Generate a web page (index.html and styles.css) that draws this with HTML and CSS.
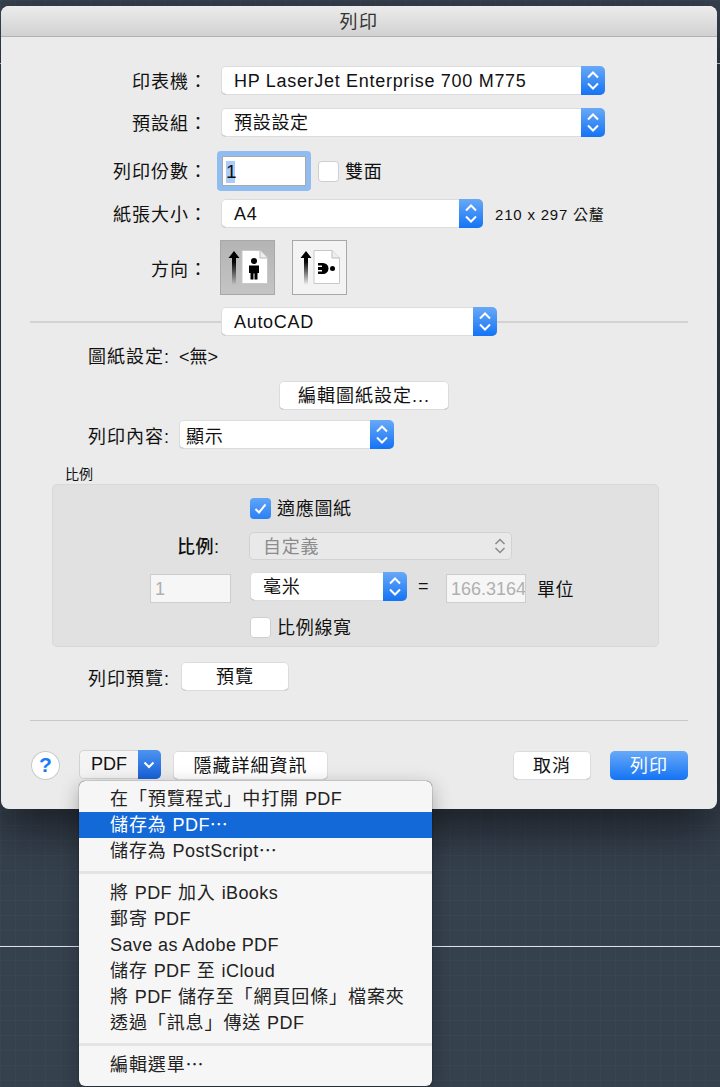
FILE: index.html
```html
<!DOCTYPE html>
<html lang="zh-Hant">
<head>
    <meta charset="UTF-8">
    <title>列印</title>
    <link rel="stylesheet" href="styles.css">
</head>
<body>
    <svg width="0" height="0" class="defs">
        <symbol id="updown" viewBox="0 0 24 29">
            <path d="M7 11.5 L12 6.5 L17 11.5 M7 17.5 L12 22.5 L17 17.5" fill="none" stroke="#fff" stroke-width="2"/>
        </symbol>
    </svg>

    <div class="line line-top"></div>
    <div class="line line-bottom"></div>

    <div class="dialog">
        <div class="titlebar">列印</div>

        <div class="row row-printer">
            <div class="label">印表機：</div>
            <div class="select select-wide"><span class="lat">HP LaserJet Enterprise 700 M775</span><i class="step"><svg><use href="#updown"/></svg></i></div>
        </div>
        <div class="row row-preset">
            <div class="label">預設組：</div>
            <div class="select select-wide"><span>預設設定</span><i class="step"><svg><use href="#updown"/></svg></i></div>
        </div>
        <div class="row row-copies">
            <div class="label">列印份數：</div>
            <div class="focus"><div class="field"><span class="sel">1</span></div></div>
            <div class="check check-copies"></div>
            <div class="check-text">雙面</div>
        </div>
        <div class="row row-paper">
            <div class="label">紙張大小：</div>
            <div class="select select-paper"><span class="lat">A4</span><i class="step"><svg><use href="#updown"/></svg></i></div>
            <div class="paper-size">210 x 297 公釐</div>
        </div>
        <div class="row row-orient">
            <div class="label label-orient">方向：</div>
            <div class="orient orient-on">
                <svg width="53" height="53" viewBox="0 0 53 53">
                    <defs>
                        <linearGradient id="fade" x1="0" y1="0" x2="0" y2="1">
                            <stop offset="0.3" stop-color="#000"/>
                            <stop offset="1" stop-color="#000" stop-opacity="0"/>
                        </linearGradient>
                    </defs>
                    <path d="M13 10 L7.5 17 H11 V44 H15 V17 H18.5 Z" fill="url(#fade)"/>
                    <path d="M21 9.5 H39 L46.5 17 V42.5 H21 Z" fill="#fff" stroke="#c8c8c8"/>
                    <path d="M39 9.5 V17 H46.5" fill="#eee" stroke="#bbb"/>
                    <circle cx="33" cy="20" r="3" fill="#000"/>
                    <path d="M28 24.500 H38 V32 H36.500 V38.500 H33.500 V32.500 H32.500 V38.500 H29.500 V32 H28 Z" fill="#000"/>
                </svg>
            </div>
            <div class="orient">
                <svg width="53" height="53" viewBox="0 0 53 53">
                    <path d="M13 10 L7.5 17 H11 V44 H15 V17 H18.5 Z" fill="url(#fade)"/>
                    <path d="M21 9.5 H39 L46.5 17 V42.5 H21 Z" fill="#fff" stroke="#c8c8c8"/>
                    <path d="M39 9.5 V17 H46.5" fill="#eee" stroke="#bbb"/>
                    <path d="M25 22 H30 A5.5 5.5 0 0 1 30 33 H25 V30.500 H29 V29 H25 V26 H29 V24.500 H25 Z" fill="#000"/>
                    <circle cx="39.500" cy="27.500" r="2.500" fill="#000"/>
                </svg>
            </div>
        </div>
        <div class="row row-app">
            <div class="rule"></div>
            <div class="select select-app"><span class="lat">AutoCAD</span><i class="step"><svg><use href="#updown"/></svg></i></div>
            <div class="rule"></div>
        </div>
        <div class="row row-setup"><span class="text-label">圖紙設定:</span><span>&lt;無&gt;</span></div>
        <div class="row row-edit">
            <div class="btn btn-edit">編輯圖紙設定...</div>
        </div>
        <div class="row row-content">
            <div class="text-label">列印內容:</div>
            <div class="select select-content"><span>顯示</span><i class="step"><svg><use href="#updown"/></svg></i></div>
        </div>

        <div class="caption">比例</div>
        <div class="group">
            <div class="group-row group-fit">
                <div class="check check-on">
                    <svg width="21" height="21" viewBox="0 0 21 21"><path d="M5.500 11 L9 14.500 L15.500 6.500" fill="none" stroke="#fff" stroke-width="2"/></svg>
                </div>
                <div class="check-text">適應圖紙</div>
            </div>
            <div class="group-row group-scale">
                <div class="scale-label">比例:</div>
                <div class="select select-off"><span>自定義</span>
                    <svg class="off-arrows" width="14" height="20" viewBox="0 0 14 20"><path d="M2.500 8 L7 3.500 L11.500 8 M2.500 12 L7 16.500 L11.500 12" fill="none" stroke="#8a8a8a" stroke-width="1.500"/></svg>
                </div>
            </div>
            <div class="group-row group-units">
                <div class="field-off field-one">1</div>
                <div class="select select-unit"><span>毫米</span><i class="step"><svg><use href="#updown"/></svg></i></div>
                <div class="equals">=</div>
                <div class="field-off field-value">166.3164</div>
                <div class="unit-text">單位</div>
            </div>
            <div class="group-row group-lineweight">
                <div class="check"></div>
                <div class="check-text">比例線寬</div>
            </div>
        </div>

        <div class="row row-preview">
            <div class="text-label">列印預覽:</div>
            <div class="btn btn-preview">預覽</div>
        </div>

        <div class="rule-full"></div>

        <div class="footer">
            <div class="help">?</div>
            <div class="pdf">
                <span>PDF</span>
                <i class="pdf-arrow"><svg width="22" height="29" viewBox="0 0 22 29"><path d="M6.500 12.500 L11 17 L15.500 12.500" fill="none" stroke="#fff" stroke-width="2"/></svg></i>
            </div>
            <div class="btn btn-hide">隱藏詳細資訊</div>
            <div class="spacer"></div>
            <div class="btn btn-cancel">取消</div>
            <div class="btn btn-print">列印</div>
        </div>
    </div>

    <div class="menu">
        <div class="item">在「預覽程式」中打開 <span class="lat">PDF</span></div>
        <div class="item item-on">儲存為 <span class="lat">PDF</span>⋯</div>
        <div class="item">儲存為 <span class="lat">PostScript</span>⋯</div>
        <div class="menu-sep"></div>
        <div class="item">將 <span class="lat">PDF</span> 加入 <span class="lat">iBooks</span></div>
        <div class="item">郵寄 <span class="lat">PDF</span></div>
        <div class="item"><span class="lat">Save as Adobe PDF</span></div>
        <div class="item">儲存 <span class="lat">PDF</span> 至 <span class="lat">iCloud</span></div>
        <div class="item">將 <span class="lat">PDF</span> 儲存至「網頁回條」檔案夾</div>
        <div class="item">透過「訊息」傳送 <span class="lat">PDF</span></div>
        <div class="menu-sep"></div>
        <div class="item">編輯選單⋯</div>
    </div>
</body>
</html>
```

FILE: styles.css
```css
* {
    box-sizing: border-box;
}

html, body {
    margin: 0;
    height: 1087px;
    overflow: hidden;
}

body {
    position: relative;
    padding: 6px 0 0 1px;
    font-family: "Liberation Sans", "Noto Sans CJK TC", sans-serif;
    font-size: 18px;
    color: #111;
    background-color: #36414e;
    background-image:
        linear-gradient(rgba(70, 82, 110, 0.2) 1px, transparent 1px),
        linear-gradient(90deg, rgba(70, 82, 110, 0.2) 1px, transparent 1px);
    background-size: 15px 15px;
}

.defs {
    position: absolute;
}

.line {
    position: absolute;
    left: 0;
    right: 0;
    height: 1px;
    background: #dfe2e5;
}

.line-top {
    top: 63px;
}

.line-bottom {
    top: 946px;
}

.dialog {
    position: relative;
    width: 716px;
    height: 803px;
    background: #ebebeb;
    border-radius: 8px;
    overflow: hidden;
    box-shadow: 0 20px 50px rgba(0, 0, 0, 0.55);
}

.titlebar {
    height: 31px;
    line-height: 32px;
    text-align: center;
    font-size: 18px;
    letter-spacing: 1.5px;
    color: #333;
    background: linear-gradient(#ececec, #d1d1d1);
    border-bottom: 1px solid #b1b1b1;
}

.row {
    display: flex;
    align-items: center;
}

.row-printer { margin-top: 29px; height: 29px; }
.row-preset { margin-top: 13px; height: 29px; }
.row-copies { margin-top: 14px; height: 40px; }
.row-paper { margin-top: 8px; height: 29px; }
.row-orient { margin-top: 12px; height: 55px; }
.row-app { margin-top: 12px; height: 29px; padding: 0 29px; }
.row-setup { margin-top: 9px; height: 24px; padding: 0 0 4px 87px; }
.row-edit { margin-top: 12px; height: 29px; padding-left: 278px; }
.row-content { margin-top: 10px; height: 29px; padding-left: 87px; }
.row-preview { margin-top: 15px; height: 29px; padding-left: 87px; }

.label {
    width: 207px;
    padding-bottom: 2px;
    text-align: right;
    letter-spacing: 1px;
}

.label-orient {
    padding-bottom: 0;
}

.text-label {
    width: 91px;
    letter-spacing: 1px;
}

.select {
    position: relative;
    display: flex;
    align-items: center;
    height: 29px;
    padding-left: 13px;
    margin-left: 13px;
    background: #fff;
    border-radius: 5px;
    box-shadow: inset 0 0 0 1px #dcdcdc, inset 0 -1px 0 #9d9d9d;
    overflow: hidden;
    letter-spacing: 0.7px;
}

.select span {
    padding-bottom: 3px;
}

.select .lat {
    padding: 2px 0 0;
}

.select-wide { width: 384px; }
.select-paper { width: 262px; }
.select-app { width: 276px; margin: 0; }
.select-content { width: 215px; margin: 0; padding-left: 7px; }
.select-content span { padding-bottom: 0; }
.select-unit { width: 157px; margin: 0; }

.step {
    position: absolute;
    top: 0;
    right: 0;
    width: 24px;
    height: 29px;
    background: linear-gradient(#68a9f7, #1473f5);
}

.step svg {
    display: block;
    width: 24px;
    height: 29px;
}

.focus {
    width: 94px;
    height: 40px;
    margin-left: 9px;
    padding: 5px;
    background: #8fbdf2;
    border-radius: 4px;
}

.field {
    height: 30px;
    padding: 4px 0 0 3px;
    background: #fff;
    border: 1px solid #a9a9a9;
    line-height: 22px;
    font-size: 19px;
}

.sel {
    display: inline-block;
    width: 9px;
    background: #a9cdf8;
}

.check {
    flex: none;
    width: 21px;
    height: 21px;
    background: #fff;
    border-radius: 4px;
    box-shadow: inset 0 0 0 1px #cfcfcf;
}

.check-copies {
    margin-left: 7px;
}

.check-on {
    background: linear-gradient(#60a5f7, #2b80f5);
    box-shadow: none;
}

.check-on svg {
    display: block;
}

.check-text {
    margin-left: 6px;
    padding-bottom: 3px;
    letter-spacing: 0.7px;
}

.paper-size {
    margin-left: 12px;
    font-size: 15px;
    letter-spacing: 0.8px;
}

.orient {
    width: 55px;
    height: 55px;
    margin-left: 17px;
    background: #f3f3f3;
    border: 1px solid #a8a8a8;
}

.orient-on {
    margin-left: 12px;
    background: linear-gradient(#b4b4b4, #c4c4c4);
}

.rule {
    flex: 1;
    height: 2px;
    background: #d2d2d2;
}

.rule-full {
    height: 1px;
    margin: 29px 29px 0;
    background: #c8c8c8;
}

.btn {
    display: flex;
    align-items: center;
    justify-content: center;
    height: 29px;
    padding-bottom: 3px;
    background: #fff;
    border-radius: 5px;
    box-shadow: inset 0 0 0 1px #dcdcdc, inset 0 -1px 0 #9d9d9d;
    letter-spacing: 1px;
}

.btn-edit { width: 170px; }
.btn-preview { width: 108px; margin-left: 2px; }
.btn-hide { width: 155px; margin: 1px 0 0 12px; }
.btn-cancel { width: 78px; margin-top: 1px; }
.btn-print {
    width: 78px;
    margin: 1px 0 0 19px;
    color: #fff;
    background: linear-gradient(#68a9f7, #1473f5);
    box-shadow: none;
}

.caption {
    height: 16px;
    margin: 17px 0 0 64px;
    font-size: 14px;
    line-height: 16px;
}

.group {
    width: 607px;
    height: 163px;
    margin: 2px 0 0 51px;
    padding-top: 13px;
    background: #e1e1e1;
    border: 1px solid #d8d8d8;
    border-radius: 5px;
}

.group-row {
    display: flex;
    align-items: center;
}

.group-fit,
.group-lineweight {
    height: 20px;
    padding-left: 197px;
}

.group-scale {
    height: 28px;
    margin-top: 14px;
    padding-left: 124px;
}

.group-units {
    height: 31px;
    margin-top: 12px;
    padding-left: 97px;
    align-items: flex-start;
}

.group-lineweight {
    margin-top: 14px;
}

.scale-label {
    width: 43px;
    padding-bottom: 3px;
    letter-spacing: 0.5px;
    font-weight: 500;
}

.select-off {
    width: 263px;
    height: 28px;
    margin-left: 29px;
    padding-left: 14px;
    color: #8c8c8c;
    background: #e9e9e9;
    box-shadow: inset 0 0 0 1px #d2d2d2;
}

.off-arrows {
    position: absolute;
    top: 4px;
    right: 5px;
}

.field-off {
    height: 29px;
    margin-top: 2px;
    padding-left: 4px;
    line-height: 28px;
    color: #b0b0b0;
    background: #f6f6f6;
    border: 1px solid #cdcdcd;
    overflow: hidden;
    white-space: nowrap;
}

.field-one {
    width: 81px;
    margin-right: 19px;
}

.field-value {
    width: 80px;
}

.equals {
    width: 39px;
    padding: 4px 0 0 11px;
}

.unit-text {
    margin: 3px 0 0 11px;
    letter-spacing: 0.5px;
}

.footer {
    display: flex;
    align-items: flex-start;
    height: 30px;
    margin-top: 29px;
    padding: 0 29px 0 30px;
}

.help {
    width: 29px;
    height: 29px;
    margin-top: 1px;
    line-height: 27px;
    text-align: center;
    font-size: 21px;
    font-weight: bold;
    color: #1a7cf5;
    background: #fff;
    border-radius: 50%;
    box-shadow: inset 0 0 0 1px #c8c8c8;
}

.pdf {
    display: flex;
    align-items: center;
    width: 82px;
    height: 29px;
    margin-left: 19px;
    padding-left: 12px;
    background: #f4f4f4;
    border-radius: 5px;
    box-shadow: inset 0 0 0 1px #d2d2d2;
    overflow: hidden;
}

.pdf span {
    flex: 1;
}

.pdf-arrow {
    width: 23px;
    height: 29px;
    background: linear-gradient(#4d94f0, #1660d8);
}

.spacer {
    flex: 1;
}

.menu {
    position: absolute;
    top: 781px;
    left: 79px;
    width: 353px;
    height: 305px;
    padding-top: 5px;
    background: #f6f6f6;
    border-radius: 6px;
    box-shadow: 0 0 1px #000, 0 6px 20px rgba(0, 0, 0, 0.3);
}

.item {
    height: 26px;
    padding-left: 31px;
    line-height: 27px;
    letter-spacing: 0.9px;
    color: #222;
}

.item .lat {
    letter-spacing: 0.4px;
}

.item-on {
    color: #fff;
    background: #1469d8;
}

.menu-sep {
    height: 3px;
    margin: 7px 0 6px;
    background: #e4e4e4;
}
```
